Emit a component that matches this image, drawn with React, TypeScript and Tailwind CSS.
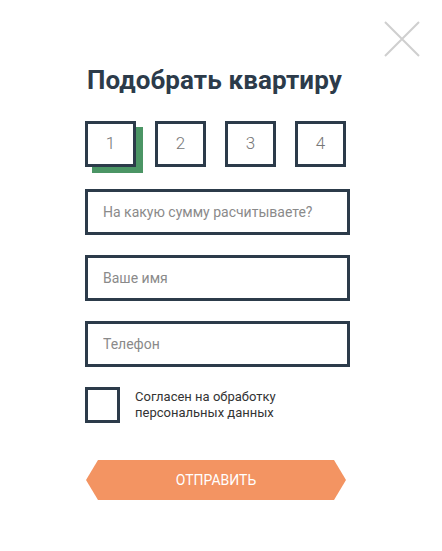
import { useState } from "react";

const steps = ["1", "2", "3", "4"];
const fields = ["На какую сумму расчитываете?", "Ваше имя", "Телефон"];

export default function App() {
  const [step, setStep] = useState("1");
  const [agree, setAgree] = useState(false);

  return (
    <div className="relative h-[551px] w-[442px] bg-white font-['Roboto',sans-serif] text-[#2c3b4a]">
      {/* Close */}
      <button className="absolute left-[384px] top-[21px] h-[36px] w-[36px]" aria-label="Закрыть">
        <svg width="36" height="36" viewBox="0 0 36 36">
          <path d="M1 1 L35 35 M35 1 L1 35" stroke="#cfcfcf" strokeWidth="2" />
        </svg>
      </button>

      <div className="ml-[85px] w-[265px] pt-[62px]">
        <h1 className="ml-[2px] whitespace-nowrap text-[26px] font-bold leading-[36px] tracking-[0.1px]">
          Подобрать квартиру
        </h1>

        {/* Steps */}
        <div className="mt-[23px] flex gap-[19px]">
          {steps.map((s) => (
            <button
              key={s}
              onClick={() => setStep(s)}
              className={`flex h-[46px] w-[51px] items-center justify-center border-[3px] border-[#2c3b4a] bg-white text-[17px] font-light text-[#777] ${
                step === s ? "shadow-[7px_6px_0_#4b9565]" : ""
              }`}
            >
              {s}
            </button>
          ))}
        </div>

        {/* Inputs */}
        <div className="mt-[22px] flex flex-col gap-[20px]">
          {fields.map((f) => (
            <input
              key={f}
              type="text"
              placeholder={f}
              className="h-[46px] w-[265px] border-[3px] border-[#2c3b4a] bg-white px-[15px] text-[14px] text-[#333] placeholder:text-[#8a8a8a] focus:outline-none"
            />
          ))}
        </div>

        {/* Agreement */}
        <div className="mt-[20px] flex items-center gap-[15px]">
          <button
            onClick={() => setAgree(!agree)}
            className="flex h-[36px] w-[35px] shrink-0 items-center justify-center border-[3px] border-[#2c3b4a] bg-white text-[#2c3b4a]"
            aria-label="Согласие"
          >
            {agree && "✓"}
          </button>
          <p className="text-[13px] leading-[16px] text-[#333]">
            Согласен на обработку
            <br />
            персональных данных
          </p>
        </div>

        {/* Submit */}
        <button className="mt-[37px] ml-px flex h-[40px] w-[260px] items-center justify-center bg-[#f39462] text-[14px] text-white [clip-path:polygon(12px_0,calc(100%-12px)_0,100%_50%,calc(100%-12px)_100%,12px_100%,0_50%)]">
          ОТПРАВИТЬ
        </button>
      </div>
    </div>
  );
}
